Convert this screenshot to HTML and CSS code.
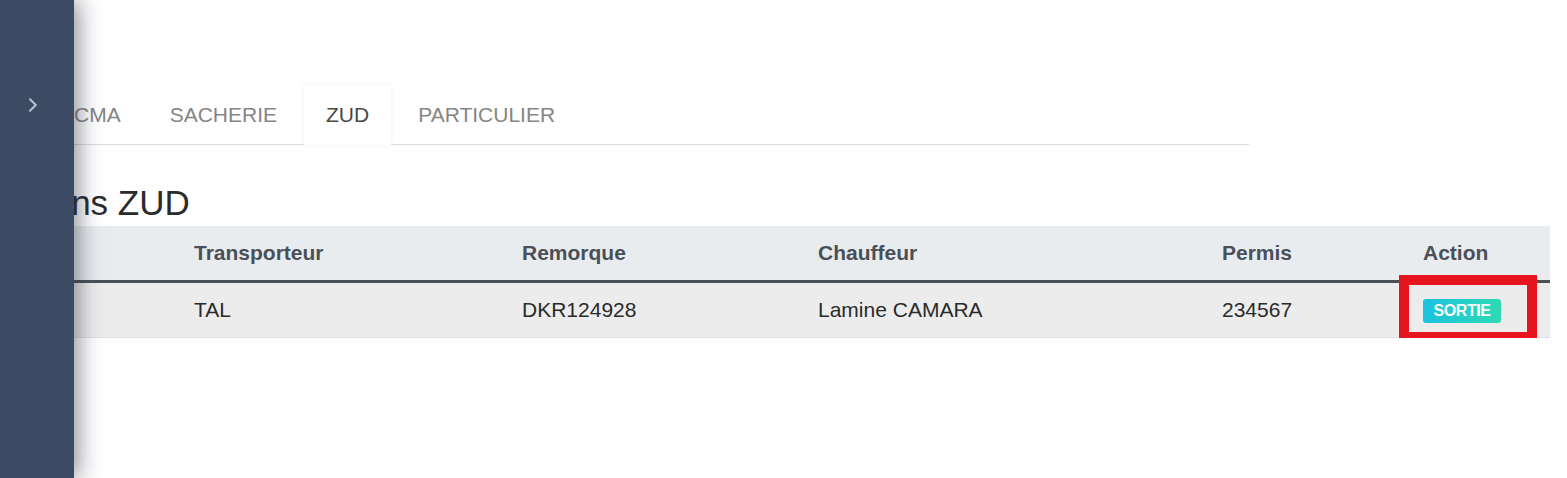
FILE: index.html
```html
<!DOCTYPE html>
<html lang="fr">
<head>
<meta charset="utf-8">
<title>Camions ZUD</title>
<link rel="stylesheet" href="styles.css">
</head>
<body>
<aside class="sidebar">
  <button class="toggle" aria-label="Ouvrir">
    <svg width="10" height="14" viewBox="0 0 10 14"><path d="M2 1.2 L7.8 7 L2 12.8" fill="none" stroke="#b9c1d1" stroke-width="2" stroke-linecap="round" stroke-linejoin="round"/></svg>
  </button>
</aside>
<main class="main">
  <nav class="tabs">
    <a class="tab">CMA</a>
    <a class="tab">SACHERIE</a>
    <a class="tab active">ZUD</a>
    <a class="tab">PARTICULIER</a>
  </nav>
  <h2 class="title">Camions ZUD</h2>
  <table class="table">
    <thead>
      <tr>
        <th class="c-mat">N°</th>
        <th class="c-tr">Transporteur</th>
        <th class="c-rem">Remorque</th>
        <th class="c-ch">Chauffeur</th>
        <th class="c-per">Permis</th>
        <th class="c-act">Action</th>
      </tr>
    </thead>
    <tbody>
      <tr>
        <td>1</td>
        <td>TAL</td>
        <td>DKR124928</td>
        <td>Lamine CAMARA</td>
        <td>234567</td>
        <td class="action-cell"><span class="badge">SORTIE</span><span class="highlight"></span></td>
      </tr>
    </tbody>
  </table>
</main>
</body>
</html>
```
FILE: styles.css
```css
html, body {
  margin: 0;
  padding: 0;
  background: #ffffff;
  font-family: "Liberation Sans", Arial, sans-serif;
  font-size: 21px;
  color: #212529;
  overflow: hidden;
}

.sidebar {
  position: fixed;
  left: 0;
  top: 0;
  bottom: 0;
  width: 74px;
  background: #3d4a63;
  box-shadow: 4px 0 22px rgba(40, 48, 64, 0.55);
  z-index: 10;
}

.toggle {
  display: block;
  margin: 98px 0 0 27px;
  padding: 0;
  width: 12px;
  height: 16px;
  border: 0;
  background: none;
}

.main {
  margin-left: -30px;
  width: 1580px;
  padding-top: 85px;
}

.tabs {
  display: flex;
  gap: 5px;
  width: 1197px;
  margin-left: 82px;
  border-bottom: 1px solid #dcdcdc;
}

.tab {
  display: block;
  height: 59px;
  line-height: 60px;
  padding: 0 22px;
  color: #858585;
  font-size: 21px;
}

.tab.active {
  color: #4a4a4a;
  background: #fff;
  box-shadow: 0 0 6px rgba(0, 0, 0, 0.06);
  margin-bottom: -1px;
  height: 60px;
}

.title {
  margin: 37px 0 2px 0;
  font-size: 35px;
  font-weight: 400;
  line-height: 42px;
  color: #2b2b2b;
}

.table {
  width: 100%;
  border-collapse: collapse;
  table-layout: fixed;
}

.table th,
.table td {
  padding: 12px 15px;
  line-height: 30px;
  text-align: left;
}

.table th {
  background: #e9ecef;
  color: #495057;
  font-weight: 700;
  border-bottom: 3px solid #4b5057;
}

.table td {
  background: #ececec;
  color: #2a2a2a;
  border-bottom: 1px solid #dee2e6;
}

.c-mat { width: 179px; }
.c-tr { width: 298px; }
.c-rem { width: 266px; }
.c-ch { width: 374px; }
.c-per { width: 171px; }
.c-act { width: 112px; }

.action-cell {
  position: relative;
}

.badge {
  display: inline-block;
  vertical-align: middle;
  width: 78px;
  height: 24px;
  line-height: 24px;
  text-align: center;
  font-size: 16px;
  font-weight: 700;
  color: #fff;
  border-radius: 3px;
  background: linear-gradient(90deg, #1bc2df, #2edab3);
  letter-spacing: -0.4px;
}

.highlight {
  position: absolute;
  left: -9px;
  top: -8px;
  width: 118px;
  height: 47px;
  border: 10px solid #e6141e;
}
```
